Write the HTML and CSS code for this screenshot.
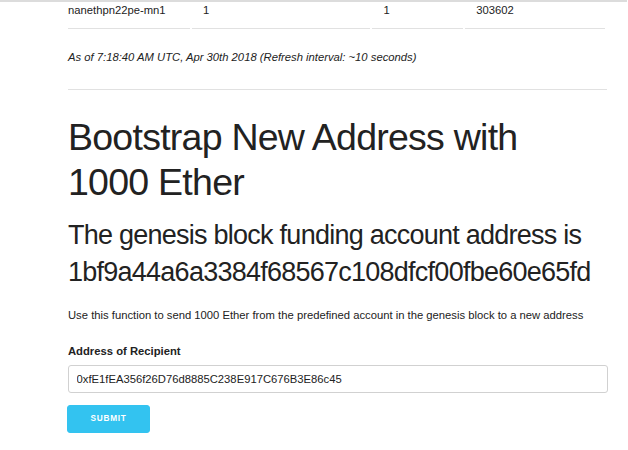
FILE: index.html
```html
<!DOCTYPE html>
<html>
<head>
<meta charset="utf-8">
<link rel="stylesheet" href="styles.css">
</head>
<body>
<div class="chrome-line"></div>
<div class="container">
  <table class="nodes">
    <tbody>
      <tr>
        <td class="c1">nanethpn22pe-mn1</td>
        <td class="c2">1</td>
        <td class="c3">1</td>
        <td class="c4">303602</td>
      </tr>
    </tbody>
  </table>
  <p class="asof"><em>As of 7:18:40 AM UTC, Apr 30th 2018 (Refresh interval: ~10 seconds)</em></p>
  <hr class="divider">
  <h1 class="title">Bootstrap New Address with 1000 Ether</h1>
  <h3 class="subtitle">The genesis block funding account address is 1bf9a44a6a3384f68567c108dfcf00fbe60e65fd</h3>
  <p class="desc">Use this function to send 1000 Ether from the predefined account in the genesis block to a new address</p>
  <form class="form">
    <label class="label" for="recipient">Address of Recipient</label>
    <input class="input" id="recipient" type="text" value="0xfE1fEA356f26D76d8885C238E917C676B3E86c45">
    <button class="btn-primary" type="button">Submit</button>
  </form>
</div>
</body>
</html>
```
FILE: styles.css
```css
html, body {
  margin: 0;
  padding: 0;
  background: #fff;
}
body {
  font-family: "Liberation Sans", Arial, sans-serif;
  font-size: 11.25px;
  line-height: 18px;
  color: #222;
}
.chrome-line {
  position: fixed;
  top: 0;
  left: 0;
  right: 1px;
  height: 2px;
  background: #dcdcdc;
  z-index: 5;
}
.container {
  margin: -10px 0 0 68px;
  width: 539px;
}
.nodes {
  border-collapse: separate;
  border-spacing: 2px;
  margin: 0 0 0 -2px;
  table-layout: fixed;
}
.nodes td {
  padding: 9px 11px;
  border-bottom: 1px solid #e1e1e1;
  text-align: left;
  white-space: nowrap;
}
.nodes .c1 { width: 122px; padding-left: 0; box-sizing: border-box; }
.nodes .c2 { width: 179px; box-sizing: border-box; }
.nodes .c3 { width: 91px; box-sizing: border-box; }
.nodes .c4 { width: 140px; box-sizing: border-box; }
.asof {
  margin: 17px 0 0;
}
.divider {
  margin: 23px 0 0;
  border: 0;
  border-top: 1px solid #e1e1e1;
  height: 0;
}
.title {
  margin: 25px 0 0;
  font-size: 37.5px;
  line-height: 45px;
  font-weight: 400;
  letter-spacing: -0.75px;
}
.subtitle {
  margin: 12px 0 0;
  font-size: 27px;
  line-height: 36.5px;
  font-weight: 400;
  letter-spacing: -0.75px;
}
.desc {
  margin: 16px 0 0;
}
.form {
  margin: 18px 0 0;
  display: flex;
  flex-direction: column;
  align-items: flex-start;
}
.label {
  font-weight: 700;
  display: block;
}
.input {
  margin-top: 4.5px;
  box-sizing: border-box;
  width: 540px;
  height: 28.5px;
  padding: 4px 7.5px;
  border: 1px solid #d1d1d1;
  border-radius: 3px;
  font-family: "Liberation Sans", Arial, sans-serif;
  font-size: 11.25px;
  color: #222;
  background: #fff;
  outline: none;
}
.btn-primary {
  margin: 11.5px 0 0 -1px;
  height: 28.5px;
  padding: 0 22.5px;
  background: #33c3f0;
  border: 1px solid #33c3f0;
  border-radius: 3px;
  color: #fff;
  font-family: "Liberation Sans", Arial, sans-serif;
  font-size: 8.25px;
  font-weight: 700;
  letter-spacing: 0.75px;
  text-transform: uppercase;
  cursor: pointer;
}
```
